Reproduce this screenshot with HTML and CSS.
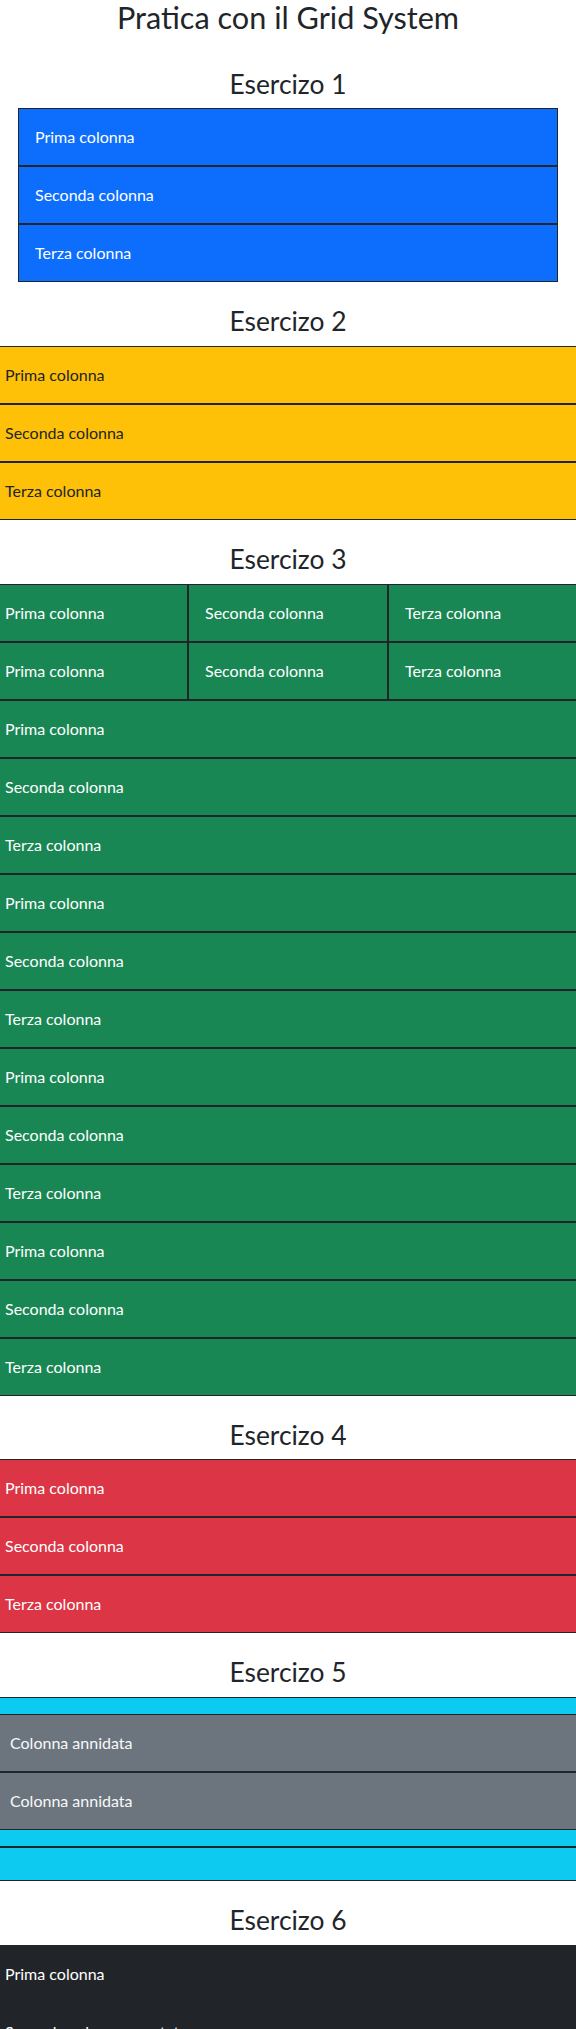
FILE: index.html
```html
<!DOCTYPE html>
<html lang="it">
<head>
<meta charset="utf-8">
<title>Pratica con il Grid System</title>
<link rel="stylesheet" href="styles.css">
</head>
<body>
<div class="page">
  <h1 class="title">Pratica con il Grid System</h1>

  <h2 class="ex-title">Esercizo 1</h2>
  <div class="container">
    <div class="grid bg-primary">
      <div class="cell bg-primary text-white">Prima colonna</div>
      <div class="cell bg-primary text-white">Seconda colonna</div>
      <div class="cell bg-primary text-white">Terza colonna</div>
    </div>
  </div>

  <h2 class="ex-title">Esercizo 2</h2>
  <div class="grid">
    <div class="cell bg-warning text-dark">Prima colonna</div>
    <div class="cell bg-warning text-dark">Seconda colonna</div>
    <div class="cell bg-warning text-dark">Terza colonna</div>
  </div>

  <h2 class="ex-title">Esercizo 3</h2>
  <div class="grid">
    <div class="cell third bg-success text-white">Prima colonna</div>
    <div class="cell third bg-success text-white">Seconda colonna</div>
    <div class="cell third bg-success text-white">Terza colonna</div>
  </div>
  <div class="grid">
    <div class="cell third bg-success text-white">Prima colonna</div>
    <div class="cell third bg-success text-white">Seconda colonna</div>
    <div class="cell third bg-success text-white">Terza colonna</div>
  </div>
  <div class="grid">
    <div class="cell bg-success text-white">Prima colonna</div>
    <div class="cell bg-success text-white">Seconda colonna</div>
    <div class="cell bg-success text-white">Terza colonna</div>
  </div>
  <div class="grid">
    <div class="cell bg-success text-white">Prima colonna</div>
    <div class="cell bg-success text-white">Seconda colonna</div>
    <div class="cell bg-success text-white">Terza colonna</div>
  </div>
  <div class="grid">
    <div class="cell bg-success text-white">Prima colonna</div>
    <div class="cell bg-success text-white">Seconda colonna</div>
    <div class="cell bg-success text-white">Terza colonna</div>
  </div>
  <div class="grid">
    <div class="cell bg-success text-white">Prima colonna</div>
    <div class="cell bg-success text-white">Seconda colonna</div>
    <div class="cell bg-success text-white">Terza colonna</div>
  </div>

  <h2 class="ex-title">Esercizo 4</h2>
  <div class="grid">
    <div class="cell bg-danger text-white">Prima colonna</div>
    <div class="cell bg-danger text-white">Seconda colonna</div>
    <div class="cell bg-danger text-white">Terza colonna</div>
  </div>

  <h2 class="ex-title">Esercizo 5</h2>
  <div class="grid">
    <div class="cell bg-info">
      <div class="grid">
        <div class="cell bg-secondary text-light">Colonna annidata</div>
        <div class="cell bg-secondary text-light">Colonna annidata</div>
      </div>
    </div>
    <div class="cell bg-info"></div>
  </div>

  <h2 class="ex-title">Esercizo 6</h2>
  <div class="grid">
    <div class="cell bg-dark text-white">Prima colonna</div>
    <div class="cell bg-dark text-white">Seconda colonna spostata</div>
    <div class="cell bg-dark text-white">Terza colonna</div>
  </div>
</div>
</body>
</html>
```
FILE: styles.css
```css
* {
  box-sizing: border-box;
}

body {
  margin: 0;
  font-family: "Lato", "Noto Sans", sans-serif;
  font-size: 16px;
  line-height: 1.5;
  color: #212529;
  background: #fff;
}

.page {
  overflow-x: hidden;
}

.title {
  margin: 0 0 32px;
  font-size: 30.64px;
  font-weight: 400;
  line-height: 1.2;
  text-align: center;
}

.ex-title {
  margin: 24px 0 8px;
  font-size: 26.38px;
  font-weight: 400;
  line-height: 1.2;
  text-align: center;
}

.container {
  width: 540px;
  margin: 0 auto;
  padding: 0 12px;
}

.grid {
  display: flex;
  flex-wrap: wrap;
  margin: 0 -12px;
}

.cell {
  flex: 0 0 100%;
  max-width: 100%;
  padding: 16px;
  border: 1px solid #212529;
  min-height: 34px;
}

.third {
  flex: 0 0 33.333333%;
  max-width: 33.333333%;
}

.bg-primary { background-color: #0d6efd; }
.bg-warning { background-color: #ffc107; }
.bg-success { background-color: #198754; }
.bg-danger { background-color: #dc3545; }
.bg-info { background-color: #0dcaf0; }
.bg-secondary { background-color: #6c757d; }
.bg-dark { background-color: #212529; }

.text-white { color: #fff; }
.text-light { color: #f8f9fa; }
.text-dark { color: #212529; }
```
